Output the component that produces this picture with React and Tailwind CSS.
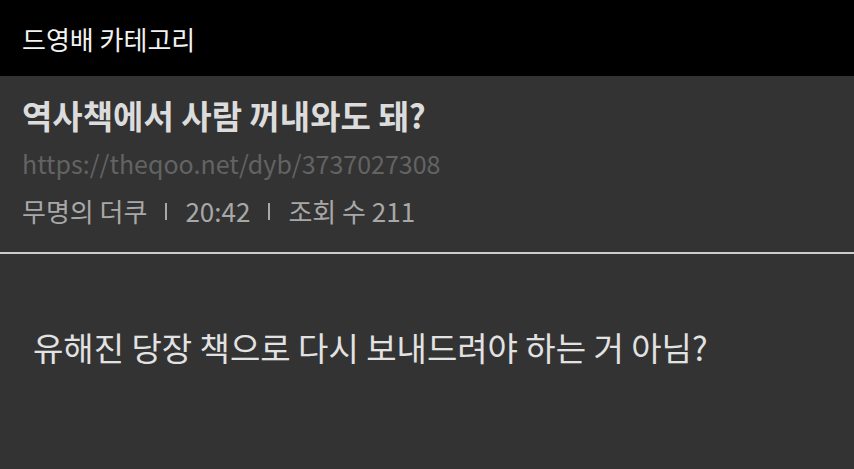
import React from 'react';

const font = { fontFamily: '"Noto Sans CJK KR", "Noto Sans", sans-serif' };

const App = () => {
  return (
    <div className="w-[854px] h-[469px] bg-[#333333] overflow-hidden" style={font}>
      {/* Category header */}
      <div className="h-[76px] bg-black flex items-center px-[22px]">
        <span className="text-[26px] text-[#f2f2f2]">드영배 카테고리</span>
      </div>

      {/* Post info */}
      <div className="px-[22px] pt-[15px] pb-[17px]">
        <h1 className="text-[33px] leading-[48px] font-bold text-[#dcdcdc] whitespace-nowrap">
          역사책에서 사람 꺼내와도 돼?
        </h1>
        <div className="text-[25px] leading-[48px] text-[#636363] whitespace-nowrap">
          https://theqoo.net/dyb/3737027308
        </div>
        <div className="flex items-center text-[26px] leading-[48px] text-[#a8a8a8] whitespace-nowrap">
          <span>무명의 더쿠</span>
          <span className="mx-[18px] w-[2px] h-[17px] bg-[#a8a8a8]" />
          <span>20:42</span>
          <span className="mx-[18px] w-[2px] h-[17px] bg-[#a8a8a8]" />
          <span>조회 수 211</span>
        </div>
      </div>

      <div className="h-[2px] bg-[#cccccc]" />

      {/* Post body */}
      <div className="px-[33px] pt-[69px]">
        <p className="text-[33px] leading-[48px] text-[#e2e2e2] whitespace-nowrap">
          유해진 당장 책으로 다시 보내드려야 하는 거 아님?
        </p>
      </div>
    </div>
  );
};

export default App;
